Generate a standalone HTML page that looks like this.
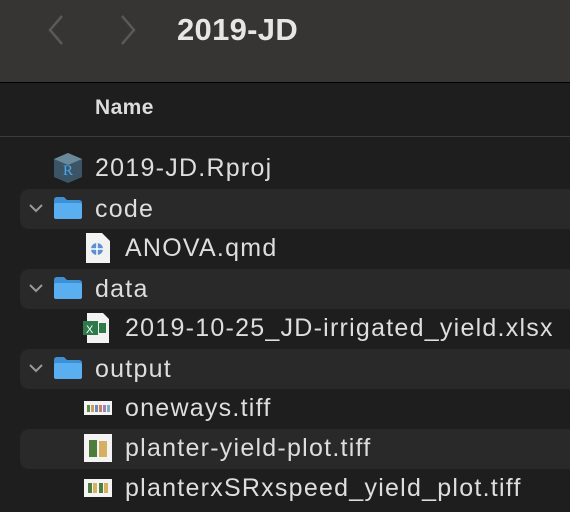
<!DOCTYPE html>
<html style="width:570px;height:512px;overflow:hidden"><head><style>
*{margin:0;padding:0;box-sizing:border-box}
body{width:570px;height:512px;background:#1f1e1e;font-family:"Liberation Sans",sans-serif;color:#dedede;position:relative;overflow:hidden}
.top{position:absolute;left:0;top:0;width:570px;height:83px;background:#363534;border-bottom:1px solid #000}
.title{position:absolute;left:177px;top:12px;font-size:31px;font-weight:bold;color:#e6e6e6;letter-spacing:0.3px}
.hdr{position:absolute;left:0;top:83px;width:570px;height:54px;border-bottom:1px solid #3c3b3b}
.hdr span{position:absolute;left:95px;top:13px;font-size:21px;font-weight:bold;color:#dcdcdc;letter-spacing:0.4px}
.stripe{position:absolute;left:20px;width:560px;height:40px;background:#2a2929;border-radius:9px}
.row{position:absolute;height:40px;font-size:25px;line-height:40px;white-space:nowrap;letter-spacing:1.25px}
.folder{position:absolute;width:28px;height:22px}
.chev{position:absolute}
</style></head><body>
<div class="top">
<svg style="position:absolute;left:40px;top:14px" width="110" height="32"><path d="M22 2 L10 16 L22 30" stroke="#5a5958" stroke-width="2.5" fill="none"/><path d="M82 2 L94 16 L82 30" stroke="#5a5958" stroke-width="2.5" fill="none"/></svg>
<div class="title">2019-JD</div>
</div>
<div class="hdr"><span>Name</span></div>

<div class="stripe" style="top:189px"></div>
<div class="stripe" style="top:269px"></div>
<div class="stripe" style="top:349px"></div>
<div class="stripe" style="top:429px"></div>

<svg style="position:absolute;left:53px;top:152px" width="30" height="32"><polygon points="15,1 29,7 29,25 15,31 1,25 1,7" fill="#3c5566"/><polygon points="15,1 29,7 15,13 1,7" fill="#6a8a9c"/><text x="10" y="23" font-family="Liberation Serif" font-size="15" fill="#4aa8e8">R</text></svg>
<div class="row" style="left:95px;top:148px">2019-JD.Rproj</div>

<svg class="chev" style="left:29px;top:203px" width="14" height="10"><path d="M1 2 L7 8 L13 2" stroke="#9a9a9a" stroke-width="2" fill="none"/></svg>
<svg class="folder" style="left:54px;top:197px" viewBox="0 0 28 22"><path d="M0 3 Q0 0 3 0 H10 L13 3 H25 Q28 3 28 6 V19 Q28 22 25 22 H3 Q0 22 0 19Z" fill="#3d8fd6"/><rect x="0" y="6" width="28" height="16" rx="2" fill="#5aaff0"/></svg>
<div class="row" style="left:95px;top:189px">code</div>

<svg style="position:absolute;left:86px;top:233px" width="24" height="30"><path d="M0 0 H16 L24 8 V30 H0Z" fill="#f2f2f2"/><circle cx="11" cy="16" r="6" fill="#5b8fd0"/><path d="M11 10 V22 M5 16 H17" stroke="#fff" stroke-width="1.5"/></svg>
<div class="row" style="left:125px;top:228px">ANOVA.qmd</div>

<svg class="chev" style="left:29px;top:283px" width="14" height="10"><path d="M1 2 L7 8 L13 2" stroke="#9a9a9a" stroke-width="2" fill="none"/></svg>
<svg class="folder" style="left:54px;top:277px" viewBox="0 0 28 22"><path d="M0 3 Q0 0 3 0 H10 L13 3 H25 Q28 3 28 6 V19 Q28 22 25 22 H3 Q0 22 0 19Z" fill="#3d8fd6"/><rect x="0" y="6" width="28" height="16" rx="2" fill="#5aaff0"/></svg>
<div class="row" style="left:95px;top:269px">data</div>

<svg style="position:absolute;left:83px;top:313px" width="28" height="30"><path d="M4 0 H20 L26 6 V30 H4Z" fill="#f2f2f2"/><rect x="16" y="10" width="7" height="10" fill="#2f7a4a"/><rect x="0" y="8" width="15" height="14" fill="#2f7a4a"/><text x="3" y="20" font-size="11" fill="#fff" font-family="Liberation Sans">X</text></svg>
<div class="row" style="left:125px;top:308px">2019-10-25_JD-irrigated_yield.xlsx</div>

<svg class="chev" style="left:29px;top:363px" width="14" height="10"><path d="M1 2 L7 8 L13 2" stroke="#9a9a9a" stroke-width="2" fill="none"/></svg>
<svg class="folder" style="left:54px;top:357px" viewBox="0 0 28 22"><path d="M0 3 Q0 0 3 0 H10 L13 3 H25 Q28 3 28 6 V19 Q28 22 25 22 H3 Q0 22 0 19Z" fill="#3d8fd6"/><rect x="0" y="6" width="28" height="16" rx="2" fill="#5aaff0"/></svg>
<div class="row" style="left:95px;top:349px">output</div>

<svg style="position:absolute;left:84px;top:401px" width="28" height="14"><rect width="28" height="14" fill="#f4f4f4"/><rect x="3" y="4" width="3" height="7" fill="#5a8a4a"/><rect x="7" y="4" width="3" height="7" fill="#c8a060"/><rect x="11" y="4" width="3" height="7" fill="#6a8ac8"/><rect x="15" y="4" width="3" height="7" fill="#d08050"/><rect x="19" y="4" width="3" height="7" fill="#a080c0"/><rect x="23" y="4" width="3" height="7" fill="#80b0c0"/></svg>
<div class="row" style="left:125px;top:388px">oneways.tiff</div>

<svg style="position:absolute;left:84px;top:434px" width="28" height="28"><rect width="28" height="28" fill="#f4f4f4"/><rect x="5" y="6" width="8" height="17" fill="#4f7d3e"/><rect x="15" y="7" width="8" height="16" fill="#d4b060"/></svg>
<div class="row" style="left:125px;top:428px">planter-yield-plot.tiff</div>

<svg style="position:absolute;left:84px;top:479px" width="28" height="18"><rect width="28" height="18" fill="#f4f4f4"/><rect x="4" y="4" width="4" height="10" fill="#4f7d3e"/><rect x="9" y="4" width="4" height="10" fill="#d4b060"/><rect x="15" y="4" width="4" height="10" fill="#4f7d3e"/><rect x="20" y="4" width="4" height="10" fill="#d4b060"/></svg>
<div class="row" style="left:125px;top:468px">planterxSRxspeed_yield_plot.tiff</div>
</body></html>
